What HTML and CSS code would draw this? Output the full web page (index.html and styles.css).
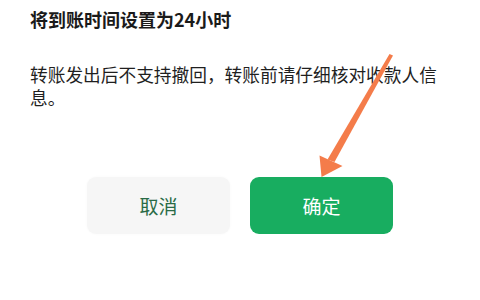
FILE: index.html
```html
<!DOCTYPE html>
<html lang="zh-CN">
<head>
    <meta charset="UTF-8">
    <meta name="viewport" content="width=device-width, initial-scale=1.0">
    <title>转账确认</title>
    <link rel="stylesheet" href="styles.css">
</head>
<body>

    <div class="dialog">
        <h2 class="dialog-title">将到账时间设置为24小时</h2>
        <p class="dialog-text">转账发出后不支持撤回，转账前请仔细核对收款人信息。</p>

        <div class="dialog-actions">
            <button class="btn btn-cancel">取消</button>
            <button class="btn btn-confirm">确定</button>
        </div>
    </div>

    <!-- annotation arrow drawn over the dialog -->
    <svg class="arrow" width="480" height="300" viewBox="0 0 480 300">
        <polygon points="389.5,54 393,55.5 334.5,162 327.5,159.5" fill="#f47c4a"/>
        <polygon points="319.5,155.5 342.5,166 321.5,177" fill="#f47c4a"/>
    </svg>

</body>
</html>
```

FILE: styles.css
```css
body {
    margin: 0;
    background-color: #ffffff;
    font-family: "Noto Sans CJK SC", "Noto Sans", sans-serif;
    width: 480px;
    height: 300px;
    overflow: hidden;
    position: relative;
}

.dialog {
    padding: 7px 30px 0 30px;
}

.dialog-title {
    margin: 0;
    font-size: 18px;
    line-height: 24px;
    font-weight: 700;
    color: #1a1a1a;
}

.dialog-text {
    margin: 32px 0 0 0;
    width: 415px;
    font-size: 17.7px;
    line-height: 23px;
    color: #1f1f1f;
}

.dialog-actions {
    margin-top: 68px;
    margin-left: -30px;
    margin-right: -30px;
    display: flex;
    justify-content: center;
    gap: 20px;
}

.btn {
    width: 143px;
    height: 57px;
    border: none;
    border-radius: 9px;
    font-family: "Noto Sans CJK SC", sans-serif;
    font-size: 19px;
    font-weight: 400;
    cursor: pointer;
}

.btn-cancel {
    background-color: #f6f6f6;
    color: #2a6b46;
    box-shadow: 0 0 3px rgba(0, 0, 0, 0.03);
}

.btn-confirm {
    background-color: #18ad60;
    color: #ffffff;
}

.arrow {
    position: absolute;
    left: 0;
    top: 0;
    pointer-events: none;
}
```
